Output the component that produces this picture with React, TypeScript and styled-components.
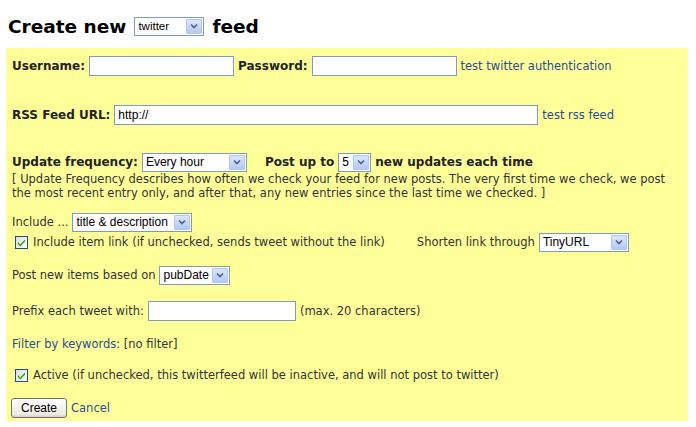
import React from 'react';
import styled, { createGlobalStyle } from 'styled-components';

const GlobalStyle = createGlobalStyle`
  html, body {
    margin: 0;
    padding: 0;
    background: #ffffff;
  }
  body {
    font-family: "DejaVu Sans", Verdana, sans-serif;
    color: #333333;
  }
`;

const Page = styled.div`
  width: 696px;
  height: 427px;
  padding: 0 8px 0 6px;
  box-sizing: border-box;
  overflow: hidden;
`;

const Title = styled.h1`
  margin: 0;
  height: 48px;
  display: flex;
  align-items: center;
  gap: 8px;
  padding: 4px 0 0 2px;
  box-sizing: border-box;
  font-family: "DejaVu Sans", Verdana, sans-serif;
  font-size: 18.5px;
  font-weight: bold;
  color: #000000;
`;

const Panel = styled.div`
  background: #ffff99;
  width: 682px;
  height: 373px;
  padding: 8px 6px 0 6px;
  box-sizing: border-box;
  font-size: 11.5px;
`;

const Row = styled.div<{ $top?: number }>`
  display: flex;
  align-items: center;
  height: 20px;
  margin-top: ${(p) => p.$top ?? 0}px;
  white-space: nowrap;
`;

const Label = styled.span<{ $bold?: boolean; $left?: number }>`
  font-weight: ${(p) => (p.$bold ? 'bold' : 'normal')};
  font-size: ${(p) => (p.$bold ? '12px' : '11.5px')};
  color: ${(p) => (p.$bold ? '#222222' : '#333333')};
  margin-left: ${(p) => p.$left ?? 0}px;
  margin-right: 4px;
`;

const Text = styled.span<{ $left?: number }>`
  margin-left: ${(p) => p.$left ?? 0}px;
  margin-right: 4px;
`;

const Link = styled.a<{ $left?: number }>`
  color: #2a4c90;
  text-decoration: none;
  margin-left: ${(p) => p.$left ?? 0}px;
  cursor: pointer;
`;

const TextInput = styled.input<{ $w: number }>`
  width: ${(p) => p.$w}px;
  height: 20px;
  box-sizing: border-box;
  border: 1px solid #7f9db9;
  background: #ffffff;
  padding: 1px 3px;
  margin: 0 4px 0 0;
  font-family: "Liberation Sans", Arial, sans-serif;
  font-size: 12px;
  color: #000000;
  outline: none;
`;

const SelectBox = styled.span<{ $w: number; $small?: boolean; $mr: number }>`
  display: inline-flex;
  align-items: stretch;
  width: ${(p) => p.$w}px;
  height: 19px;
  box-sizing: border-box;
  border: 1px solid #7f9db9;
  background: #ffffff;
  margin-right: ${(p) => p.$mr}px;
  font-family: "Liberation Sans", Arial, sans-serif;
  font-weight: normal;
  font-size: ${(p) => (p.$small ? 11.5 : 12)}px;
  color: #000000;
`;

const SelectValue = styled.span`
  flex: 1;
  display: flex;
  align-items: center;
  padding-left: 3px;
  overflow: hidden;
`;

const ArrowBox = styled.span`
  width: 16px;
  margin: 1px;
  display: flex;
  align-items: center;
  justify-content: center;
  background: linear-gradient(#dce6fc, #b4c9f8);
  border: 1px solid #b2c5f0;
  border-radius: 1px;
  box-sizing: border-box;
`;

const Select = ({ value, w, small, mr = 4 }: { value: string; w: number; small?: boolean; mr?: number }) => (
  <SelectBox $w={w} $small={small} $mr={mr}>
    <SelectValue>{value}</SelectValue>
    <ArrowBox>
      <svg width="8" height="6" viewBox="0 0 8 6">
        <path d="M1 1.5 L4 4.5 L7 1.5" fill="none" stroke="#4d6185" strokeWidth="1.6" />
      </svg>
    </ArrowBox>
  </SelectBox>
);

const CheckWrap = styled.span`
  display: inline-flex;
  margin: 0 5px 0 3px;
`;

const Check = () => (
  <CheckWrap>
    <svg width="13" height="13" viewBox="0 0 13 13">
      <defs>
        <linearGradient id="cb" x1="0" y1="0" x2="1" y2="1">
          <stop offset="0" stopColor="#dcdcd6" />
          <stop offset="1" stopColor="#ffffff" />
        </linearGradient>
      </defs>
      <rect x="0.5" y="0.5" width="12" height="12" fill="url(#cb)" stroke="#1c5180" />
      <path d="M3 6 L5.3 8.5 L10 3.6 L10 5.6 L5.3 10.5 L3 8 Z" fill="#21a121" />
    </svg>
  </CheckWrap>
);

const Desc = styled.div`
  line-height: 14px;
  color: #333333;
  white-space: nowrap;
`;

const Button = styled.button`
  height: 20px;
  margin: 0 4px 0 -1px;
  padding: 0 9px;
  font-family: "Liberation Sans", Arial, sans-serif;
  font-size: 12px;
  color: #000000;
  border: 1px solid #6f7370;
  border-radius: 3px;
  background: linear-gradient(#ffffff, #ecebe6 85%, #d6d0c5);
`;

export default function App() {
  return (
    <Page>
      <GlobalStyle />
      <Title>
        <span>Create new</span>
        <Select value="twitter" w={70} small mr={0} />
        <span>feed</span>
      </Title>
      <Panel>
        <Row>
          <Label $bold>Username:</Label>
          <TextInput $w={145} />
          <Label $bold>Password:</Label>
          <TextInput $w={145} />
          <Link>test twitter authentication</Link>
        </Row>
        <Row $top={29}>
          <Label $bold>RSS Feed URL:</Label>
          <TextInput $w={424} defaultValue="http://" />
          <Link>test rss feed</Link>
        </Row>
        <Row $top={27}>
          <Label $bold>Update frequency:</Label>
          <Select value="Every hour" w={105} />
          <Label $bold $left={14}>Post up to</Label>
          <Select value="5" w={33} />
          <Label $bold>new updates each time</Label>
        </Row>
        <Desc>
          [ Update Frequency describes how often we check your feed for new posts. The very first time we check, we post
          <br />
          the most recent entry only, and after that, any new entries since the last time we checked. ]
        </Desc>
        <Row $top={12}>
          <Text>Include ...</Text>
          <Select value="title &amp; description" w={120} />
        </Row>
        <Row>
          <Check />
          <Text>Include item link (if unchecked, sends tweet without the link)</Text>
          <Text $left={28}>Shorten link through</Text>
          <Select value="TinyURL" w={90} />
        </Row>
        <Row $top={13}>
          <Text>Post new items based on</Text>
          <Select value="pubDate" w={71} />
        </Row>
        <Row $top={16}>
          <Text>Prefix each tweet with:</Text>
          <TextInput $w={148} />
          <Text>(max. 20 characters)</Text>
        </Row>
        <Row $top={13}>
          <Link>Filter by keywords</Link>
          <Text>: [no filter]</Text>
        </Row>
        <Row $top={11}>
          <Check />
          <Text>Active (if unchecked, this twitterfeed will be inactive, and will not post to twitter)</Text>
        </Row>
        <Row $top={13}>
          <Button>Create</Button>
          <Link>Cancel</Link>
        </Row>
      </Panel>
    </Page>
  );
}
